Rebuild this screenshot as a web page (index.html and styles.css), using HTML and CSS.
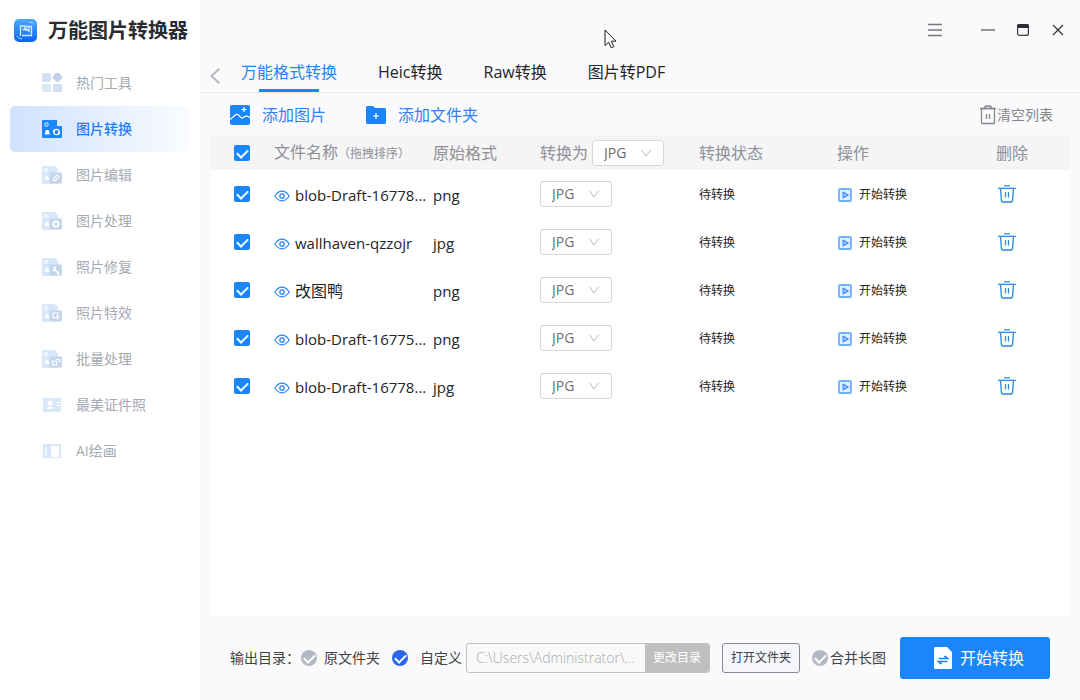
FILE: index.html
```html
<!DOCTYPE html>
<html lang="zh-CN">
<head>
<meta charset="utf-8">
<meta name="viewport" content="width=device-width, initial-scale=1">
<title>万能图片转换器</title>
<link rel="stylesheet" href="styles.css">
</head>
<body>
<svg class="sprite" aria-hidden="true">
  <defs>
    <linearGradient id="logo-fill" x1="0" y1="0" x2="0" y2="1">
      <stop offset="0" stop-color="#4cacff"/><stop offset="1" stop-color="#0a66ee"/>
    </linearGradient>
    <symbol id="i-eye" viewBox="0 0 16 12">
      <path d="M.8 6C3 2.600 5.300 1.200 8 1.200S13 2.600 15.200 6C13 9.400 10.700 10.800 8 10.800S3 9.400.8 6z" fill="none" stroke="#2b86f5" stroke-width="1.200"/>
      <circle cx="8" cy="6" r="2.200" fill="none" stroke="#2b86f5" stroke-width="1.300"/>
    </symbol>
    <symbol id="i-down" viewBox="0 0 10 8">
      <path d="M.5 1 5 7 9.500 1" fill="none" stroke="#b4b7bd" stroke-width="1"/>
    </symbol>
    <symbol id="i-play" viewBox="0 0 14 14">
      <rect x="1" y="1" width="12" height="12" rx="1" fill="#e0efff" stroke="#6fb0fb" stroke-width="1.800"/>
      <path d="M5.200 4.200v5.600L10 7z" fill="#b5d6fd" stroke="#2f86f0" stroke-width="1.200"/>
    </symbol>
    <symbol id="i-trash" viewBox="0 0 18 18">
      <g fill="none" stroke="#2b86e8" stroke-width="1.300">
        <path d="M6 .8h6M0 3.300h18M2.500 3.300l.9 12.100q.1 1.600 1.600 1.600h8q1.500 0 1.600-1.600l.9-12.100"/>
        <path d="M7.500 7v5.500M10.500 7v5.500"/>
      </g>
    </symbol>
    <symbol id="i-photo" viewBox="0 0 20 18">
      <path d="M1 0h12l3 3v14a1 1 0 0 1-1 1H1a1 1 0 0 1-1-1V1a1 1 0 0 1 1-1z" fill="#d8e6f9"/>
      <circle cx="4" cy="4" r="1.600" fill="none" stroke="#fff"/>
      <path d="M2 14l2.500-4.500h1L8 14z" fill="#fff"/>
      <rect x="7.500" y="6.500" width="12.500" height="11" rx="1" fill="#c5d5ea"/>
    </symbol>
  </defs>
</svg>

<div class="app">
  <aside class="sidebar">
    <header class="brand">
      <svg class="logo" viewBox="0 0 23 23" aria-hidden="true">
        <rect width="23" height="23" rx="5" fill="url(#logo-fill)"/>
        <path d="M6.500 17V7h4.500v3.500H8.500M12 7.500h5.500v9H8M12 12V9.500l3 3V8" fill="none" stroke="#d6ebff" stroke-width="1.300"/>
        <path d="M3 17q1 2.500 5 3M15 3q4 0 5 3" fill="none" stroke="#a5d3ff"/>
      </svg>
      <h1>万能图片转换器</h1>
    </header>
    <nav class="menu">
      <a href="#"><svg viewBox="0 0 20 20"><rect width="9" height="9" rx="2" fill="#d3e0f1"/><rect x="11" y="0" width="8" height="8" rx="2" transform="rotate(45 15 4.500)" fill="#c0d1e8"/><rect y="11" width="9" height="8" rx="1" fill="#dde8f6"/><rect x="11" y="11" width="9" height="8" rx="1" fill="#d3e0f1"/></svg>热门工具</a>
      <a href="#" class="active"><svg viewBox="0 0 20 18"><path d="M1 0h14v6h4a1 1 0 0 1 1 1v10a1 1 0 0 1-1 1H1a1 1 0 0 1-1-1V1a1 1 0 0 1 1-1z" fill="#1b86fb"/><circle cx="4.500" cy="4.500" r="1.700" fill="none" stroke="#fff"/><path d="M2.500 14.500 4 10h2.500L8 14.500z" fill="#fff"/><circle cx="14.500" cy="12" r="2.700" fill="none" stroke="#fff" stroke-width="1.200"/><path d="M11 9v3h2zM18 15v-3h-2z" fill="#fff"/></svg>图片转换</a>
      <a href="#"><svg viewBox="0 0 20 18"><use href="#i-photo"/><path d="M11.500 14.500v-2l3.500-3.500 2 2-3.500 3.500z" fill="none" stroke="#fff" stroke-width="1.200"/></svg>图片编辑</a>
      <a href="#"><svg viewBox="0 0 20 18"><use href="#i-photo"/><circle cx="14" cy="12" r="2.500" fill="none" stroke="#fff" stroke-width="1.500"/><path d="M14 8v1.500M14 14.500V16M10 12h1.500M16.500 12H18M11.200 9.200l1 1M15.800 13.800l1 1M11.200 14.800l1-1M15.800 10.200l1-1" stroke="#fff"/></svg>图片处理</a>
      <a href="#"><svg viewBox="0 0 20 18"><use href="#i-photo"/><path d="M11 8.500h3v3l4 4-1.500 1.500-4-4h-2v-2h2z" fill="#fff"/></svg>照片修复</a>
      <a href="#"><svg viewBox="0 0 20 18"><use href="#i-photo"/><path d="M11 9h5v5h-5zM14.500 11l2 4" fill="none" stroke="#fff" stroke-width="1.200"/></svg>照片特效</a>
      <a href="#"><svg viewBox="0 0 20 18"><use href="#i-photo"/><path d="M10.500 11h4v4h-4zM14 9.500h3.500V13" fill="none" stroke="#fff" stroke-width="1.200"/></svg>批量处理</a>
      <a href="#"><svg viewBox="0 0 20 18"><rect x="1" y="2" width="18" height="14" fill="#d8e8fb"/><circle cx="8" cy="7" r="2.500" fill="#fff"/><path d="M4 13q4-5 8 0zM14 6h4v1h-4zM15 9h3v1h-3z" fill="#fff"/></svg>最美证件照</a>
      <a href="#"><svg viewBox="0 0 20 18"><rect x="1" y="2" width="18" height="14" fill="#d8e6f9"/><rect x="9" y="4" width="8" height="11" rx="1" fill="#fff"/><path d="M4 5v9M2.500 8h3" stroke="#fff"/></svg>AI绘画</a>
    </nav>
  </aside>

  <main class="main">
    <div class="window-bar">
      <button type="button" aria-label="菜单"><svg viewBox="0 0 14 14"><path d="M0 1.500h14M0 7h14M0 12.500h14" stroke="#77797d" stroke-width="1.500"/></svg></button>
      <button type="button" aria-label="最小化" class="min"><svg viewBox="0 0 14 14"><path d="M0 7h14" stroke="#707277" stroke-width="1.500"/></svg></button>
      <button type="button" aria-label="最大化"><svg viewBox="0 0 14 14"><rect x="1.600" y="1.600" width="10.800" height="10.800" rx="2" fill="none" stroke="#3c3d41" stroke-width="1.200"/><path d="M1 5V3q0-2 2-2h8q2 0 2 2v2z" fill="#2c2d31"/></svg></button>
      <button type="button" aria-label="关闭"><svg viewBox="0 0 14 14"><path d="m2 2 10 10M12 2 2 12" stroke="#333" stroke-width="1.200"/></svg></button>
    </div>

    <nav class="tabs">
      <button type="button" class="back" aria-label="后退"><svg viewBox="0 0 10 16"><path d="M9.500.8 1.300 8l8.200 7.200" fill="none" stroke="#b3b5ba" stroke-width="1.800"/></svg></button>
      <a href="#" class="active">万能格式转换</a>
      <a href="#">Heic转换</a>
      <a href="#">Raw转换</a>
      <a href="#">图片转PDF</a>
    </nav>

    <div class="toolbar">
      <button type="button"><svg viewBox="0 0 20 20"><rect width="20" height="20" rx="2" fill="#1b86fb"/><path d="M0 14.500 6 9.500q1-.7 2 .2l3 2.800q1 .8 2.200 0L16.500 11 20 12.500" fill="none" stroke="#fff" stroke-width="1.200"/><path d="M14 2v5M11.500 4.500h5" stroke="#fff" stroke-width="1.200"/></svg>添加图片</button>
      <button type="button" class="folder"><svg viewBox="0 0 20 20"><path d="M1.500 1H7l2 2h9.500A1.500 1.500 0 0 1 20 4.500v13a1.500 1.500 0 0 1-1.500 1.500h-17A1.500 1.500 0 0 1 0 17.500v-15A1.500 1.500 0 0 1 1.500 1z" fill="#1b86fb"/><path d="M10 8v6M7 11h6" stroke="#fff" stroke-width="1.200"/></svg>添加文件夹</button>
      <button type="button" class="clear"><svg viewBox="0 0 16 20"><g fill="none" stroke="#85878b" stroke-width="1.300"><path d="M0 3.500h16M4.500 3.300q0-2.300 2-2.300h3q2 0 2 2.300"/><rect x="1.500" y="3.500" width="13" height="15" rx="1"/><path d="M6.500 9v5M9.500 9v5"/></g></svg>清空列表</button>
    </div>

    <section class="list">
      <table>
        <colgroup><col class="c-check"><col class="c-name"><col class="c-format"><col class="c-target"><col class="c-status"><col class="c-action"><col></colgroup>
        <thead>
          <tr>
            <th><input type="checkbox" class="tick" aria-label="全选" checked></th>
            <th>文件名称<small>（拖拽排序）</small></th>
            <th>原始格式</th>
            <th><div class="target"><label for="fmt-all">转换为</label><span class="pick"><select id="fmt-all"><option>JPG</option></select><svg><use href="#i-down"/></svg></span></div></th>
            <th>转换状态</th>
            <th>操作</th>
            <th>删除</th>
          </tr>
        </thead>
        <tbody>
          <tr>
            <td><input type="checkbox" class="tick" aria-label="选择文件 1" checked></td>
            <td><div class="file"><svg><use href="#i-eye"/></svg>blob-Draft-16778...</div></td>
            <td class="format">png</td>
            <td><span class="pick"><select aria-label="目标格式"><option>JPG</option></select><svg><use href="#i-down"/></svg></span></td>
            <td class="status">待转换</td>
            <td><button type="button" class="start"><svg><use href="#i-play"/></svg>开始转换</button></td>
            <td><button type="button" class="remove" aria-label="删除"><svg><use href="#i-trash"/></svg></button></td>
          </tr>
          <tr>
            <td><input type="checkbox" class="tick" aria-label="选择文件 2" checked></td>
            <td><div class="file"><svg><use href="#i-eye"/></svg>wallhaven-qzzojr</div></td>
            <td class="format">jpg</td>
            <td><span class="pick"><select aria-label="目标格式"><option>JPG</option></select><svg><use href="#i-down"/></svg></span></td>
            <td class="status">待转换</td>
            <td><button type="button" class="start"><svg><use href="#i-play"/></svg>开始转换</button></td>
            <td><button type="button" class="remove" aria-label="删除"><svg><use href="#i-trash"/></svg></button></td>
          </tr>
          <tr>
            <td><input type="checkbox" class="tick" aria-label="选择文件 3" checked></td>
            <td><div class="file han"><svg><use href="#i-eye"/></svg>改图鸭</div></td>
            <td class="format">png</td>
            <td><span class="pick"><select aria-label="目标格式"><option>JPG</option></select><svg><use href="#i-down"/></svg></span></td>
            <td class="status">待转换</td>
            <td><button type="button" class="start"><svg><use href="#i-play"/></svg>开始转换</button></td>
            <td><button type="button" class="remove" aria-label="删除"><svg><use href="#i-trash"/></svg></button></td>
          </tr>
          <tr>
            <td><input type="checkbox" class="tick" aria-label="选择文件 4" checked></td>
            <td><div class="file"><svg><use href="#i-eye"/></svg>blob-Draft-16775...</div></td>
            <td class="format">png</td>
            <td><span class="pick"><select aria-label="目标格式"><option>JPG</option></select><svg><use href="#i-down"/></svg></span></td>
            <td class="status">待转换</td>
            <td><button type="button" class="start"><svg><use href="#i-play"/></svg>开始转换</button></td>
            <td><button type="button" class="remove" aria-label="删除"><svg><use href="#i-trash"/></svg></button></td>
          </tr>
          <tr>
            <td><input type="checkbox" class="tick" aria-label="选择文件 5" checked></td>
            <td><div class="file"><svg><use href="#i-eye"/></svg>blob-Draft-16778...</div></td>
            <td class="format">jpg</td>
            <td><span class="pick"><select aria-label="目标格式"><option>JPG</option></select><svg><use href="#i-down"/></svg></span></td>
            <td class="status">待转换</td>
            <td><button type="button" class="start"><svg><use href="#i-play"/></svg>开始转换</button></td>
            <td><button type="button" class="remove" aria-label="删除"><svg><use href="#i-trash"/></svg></button></td>
          </tr>
        </tbody>
      </table>
    </section>

    <footer class="output">
      <span class="caption">输出目录：</span>
      <label class="choice source"><input type="radio" name="dir" class="round">原文件夹</label>
      <label class="choice custom"><input type="radio" name="dir" class="round" checked>自定义</label>
      <div class="path">
        <input type="text" aria-label="输出路径" value="C:\Users\Administrator\..." readonly>
        <button type="button">更改目录</button>
      </div>
      <button type="button" class="open">打开文件夹</button>
      <label class="choice merge"><input type="checkbox" class="round">合并长图</label>
      <button type="button" class="convert"><svg viewBox="0 0 18 22"><path d="M1.500 0H13l5 5v15.500a1.500 1.500 0 0 1-1.500 1.500h-15A1.500 1.500 0 0 1 0 20.500v-19A1.500 1.500 0 0 1 1.500 0z" fill="#fff"/><path d="M4.500 11.500h9L10.500 9M13.500 14.500h-9l3 2.500" fill="none" stroke="#1b86fb" stroke-width="1.700"/></svg>开始转换</button>
    </footer>
  </main>
</div>

<svg class="pointer" viewBox="0 0 14 20" aria-hidden="true"><path d="M1 1v15.500l3.700-3.300 2.500 5.600 2.600-1.200-2.500-5.400H12z" fill="#fff" stroke="#1c1d22"/></svg>
</body>
</html>
```
FILE: styles.css
```css
* {
  box-sizing: border-box;
}

body {
  margin: 0;
  background: #fafafc;
  color: #222427;
  font: 16px/24px "Open Sans", "Noto Sans CJK SC", sans-serif;
}

h1,
th {
  margin: 0;
  font-weight: 400;
}

a {
  color: inherit;
  text-decoration: none;
}

button,
input,
select {
  margin: 0;
  padding: 0;
  border: 0;
  background: none;
  color: inherit;
  font: inherit;
}

svg {
  display: block;
  flex: none;
}

.sprite {
  position: absolute;
  width: 0;
  height: 0;
}

.app {
  display: grid;
  grid-template-columns: 200px 1fr;
  min-height: 100vh;
}

/* Sidebar */
.sidebar {
  background: #fff;
}

.brand {
  display: flex;
  align-items: center;
  gap: 11px;
  height: 60px;
  padding-left: 14px;
}

.logo {
  width: 23px;
  height: 23px;
}

.brand h1 {
  padding-top: 2px;
  color: #2b2c30;
  font-size: 20px;
  font-weight: 700;
  line-height: 28px;
  white-space: nowrap;
}

.menu {
  padding: 0 10px;
}

.menu a {
  display: flex;
  align-items: center;
  gap: 14px;
  height: 46px;
  padding-left: 32px;
  border-radius: 5px;
  color: #a4aab3;
  font-size: 14px;
}

.menu svg {
  width: 20px;
  height: 20px;
}

.menu .active {
  background: linear-gradient(90deg, #cfe2ff, #fafcff);
  color: #1b7ffa;
  font-weight: 500;
}

/* Main column */
.main {
  display: flex;
  flex-direction: column;
  min-width: 0;
}

.window-bar {
  display: flex;
  justify-content: flex-end;
  gap: 21px;
  padding: 23px 15px 15px;
}

.window-bar svg {
  width: 14px;
  height: 14px;
}

.window-bar .min {
  margin-left: 18px;
}

.tabs {
  display: flex;
  gap: 41px;
  height: 41px;
  padding-left: 10px;
  border-bottom: 1px solid #e7e8eb;
}

.tabs a {
  position: relative;
  padding-top: 8px;
}

.tabs .back {
  margin-right: -20px;
  padding-top: 8px;
}

.back svg {
  width: 10px;
  height: 16px;
}

.tabs .active {
  color: #2583f7;
}

.tabs .active::after {
  position: absolute;
  bottom: 0;
  left: calc(50% - 30px);
  width: 60px;
  height: 3px;
  background: #1b86fb;
  content: "";
}

.toolbar {
  display: flex;
  align-items: center;
  gap: 40px;
  height: 43px;
  padding: 0 27px 0 30px;
  color: #2f83f7;
}

.toolbar button {
  display: flex;
  align-items: center;
  gap: 12px;
}

.toolbar svg {
  width: 20px;
  height: 20px;
}

.toolbar .clear {
  gap: 1px;
  margin-left: auto;
  color: #85878b;
  font-size: 14px;
}

.toolbar .clear svg {
  width: 16px;
}

/* File list */
.list {
  flex: 1;
  margin: 0 10px 0 11px;
  background: #fff;
}

table {
  width: 100%;
  border-collapse: collapse;
  table-layout: fixed;
}

.c-check {
  width: 63px;
}

.c-name,
.c-target,
.c-action {
  width: 159px;
}

.c-format {
  width: 107px;
}

.c-status {
  width: 138px;
}

th,
td {
  padding: 0;
  text-align: left;
  white-space: nowrap;
}

thead tr {
  height: 34px;
  background: #f5f5f6;
  color: #8d9096;
}

th small {
  font-size: 12px;
}

tbody tr {
  height: 48px;
}

th:first-child,
td:first-child {
  padding-left: 23px;
}

.tick {
  display: block;
  width: 16px;
  height: 16px;
  border-radius: 2px;
  background: #1b86fb;
  appearance: none;
}

.tick::before,
.round::before {
  display: block;
  width: 9px;
  height: 5px;
  margin: 4px auto 0;
  border: solid #fff;
  border-width: 0 0 2px 2px;
  transform: rotate(-45deg);
  content: "";
}

.file,
.format {
  padding-top: 1px;
  font-size: 15px;
}

.file {
  display: flex;
  align-items: center;
  gap: 5px;
}

.han {
  font-size: 16px;
}

.file svg {
  width: 16px;
  height: 12px;
  margin-top: 3px;
}

.target {
  display: flex;
  align-items: center;
  gap: 4px;
}

.pick {
  display: grid;
  align-items: center;
  width: 72px;
  height: 26px;
  border: 1px solid #d5d6da;
  border-radius: 3px;
  background: #fff;
}

.pick select,
.pick svg {
  grid-area: 1 / 1;
}

.pick select {
  height: 24px;
  padding-left: 11px;
  color: #6a6c70;
  font-size: 14px;
  appearance: none;
}

.pick svg {
  justify-self: end;
  width: 10px;
  height: 8px;
  margin-right: 12px;
  pointer-events: none;
}

.status,
.start {
  padding-top: 2px;
  font-size: 12px;
}

.start {
  display: flex;
  align-items: center;
  gap: 7px;
  padding-left: 1px;
}

.start svg {
  width: 14px;
  height: 14px;
}

.remove {
  display: block;
  padding-left: 2px;
}

.remove svg {
  width: 18px;
  height: 18px;
}

/* Output bar */
.output {
  display: flex;
  align-items: center;
  height: 84px;
  padding: 0 30px;
  color: #3f4146;
  font-size: 14px;
  white-space: nowrap;
}

.caption {
  width: 71px;
}

.choice {
  display: flex;
  align-items: center;
}

.round {
  flex: none;
  width: 16px;
  height: 16px;
  border-radius: 50%;
  background: #b3b8c2;
  appearance: none;
}

.round:checked {
  background: #2a66ea;
}

.source {
  gap: 7px;
}

.custom {
  gap: 12px;
  margin-left: 12px;
}

.merge {
  gap: 2px;
  margin-left: 12px;
}

.path {
  display: flex;
  flex: 0 1 244px;
  height: 30px;
  margin-left: 4px;
  overflow: hidden;
  border: 1px solid #bfc0c2;
  border-radius: 3px;
  background: #f9f9f9;
}

.path input {
  flex: 1;
  min-width: 0;
  padding-left: 9px;
  color: #a9aaab;
  font-weight: 300;
}

.path button {
  width: 64px;
  background: #bfbfbf;
  color: #fff;
  font-size: 12px;
}

.open {
  width: 78px;
  height: 30px;
  margin-left: 12px;
  border: 1px solid #85899a;
  border-radius: 3px;
  background: #f4f6fa;
  font-size: 12px;
}

.convert {
  display: flex;
  align-items: center;
  justify-content: center;
  gap: 8px;
  width: 150px;
  height: 42px;
  margin-left: auto;
  padding-left: 8px;
  border-radius: 3px;
  background: #1b86fb;
  color: #fff;
  font-size: 16px;
}

.convert svg {
  width: 18px;
  height: 22px;
}

.pointer {
  position: absolute;
  top: 29px;
  left: 604px;
  width: 14px;
  height: 20px;
  pointer-events: none;
}
```
